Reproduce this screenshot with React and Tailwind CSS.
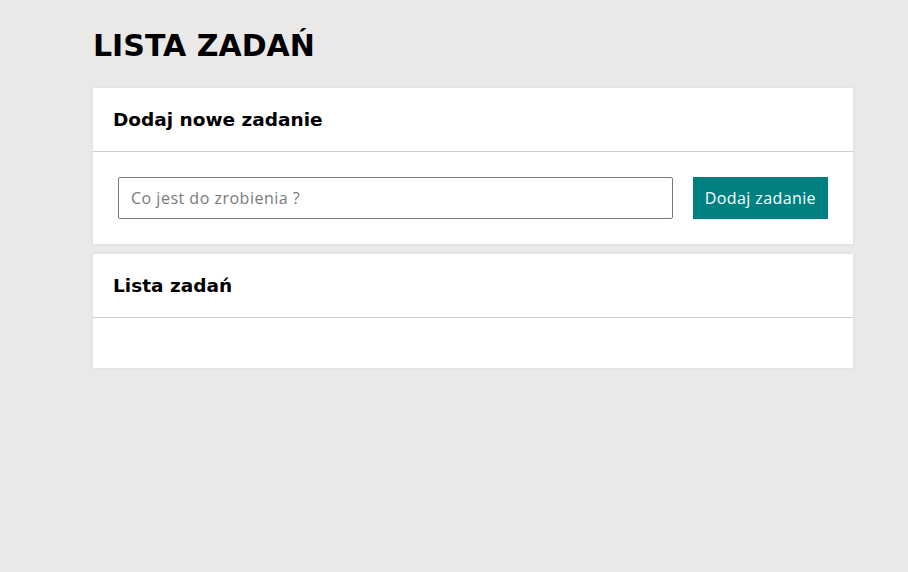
export default function App() {
  return (
    <div className="min-h-screen w-full bg-[#ebe9e7] font-['Open_Sans',sans-serif] text-black">
      <div className="ml-[93px] w-[760px] pt-[26px]">
        <h1 className="font-['DejaVu_Sans',sans-serif] text-[30px] font-bold leading-[40px]">LISTA ZADAŃ</h1>

        <div className="mt-[22px] bg-white shadow-[0_0_3px_rgba(0,0,0,0.08)]">
          <div className="flex h-[64px] items-center border-b border-[#cfcfcf] px-5">
            <h2 className="font-['DejaVu_Sans',sans-serif] text-[18.5px] font-bold">Dodaj nowe zadanie</h2>
          </div>
          <div className="flex items-center gap-5 px-[25px] py-[25px]">
            <input
              type="text"
              placeholder="Co jest do zrobienia ?"
              className="h-[42px] flex-1 rounded-[2px] border border-[#7a7a7a] px-3 text-[16px] tracking-[0.5px] placeholder:text-[#7b7b7b] outline-none"
            />
            <button className="h-[42px] bg-[#008080] px-[12px] text-[16px] tracking-[0.4px] text-white">
              Dodaj zadanie
            </button>
          </div>
        </div>

        <div className="mt-[10px] bg-white shadow-[0_0_3px_rgba(0,0,0,0.08)]">
          <div className="flex h-[64px] items-center border-b border-[#cfcfcf] px-5">
            <h2 className="font-['DejaVu_Sans',sans-serif] text-[18.5px] font-bold">Lista zadań</h2>
          </div>
          <div className="h-[50px]"></div>
        </div>
      </div>
    </div>
  );
}
